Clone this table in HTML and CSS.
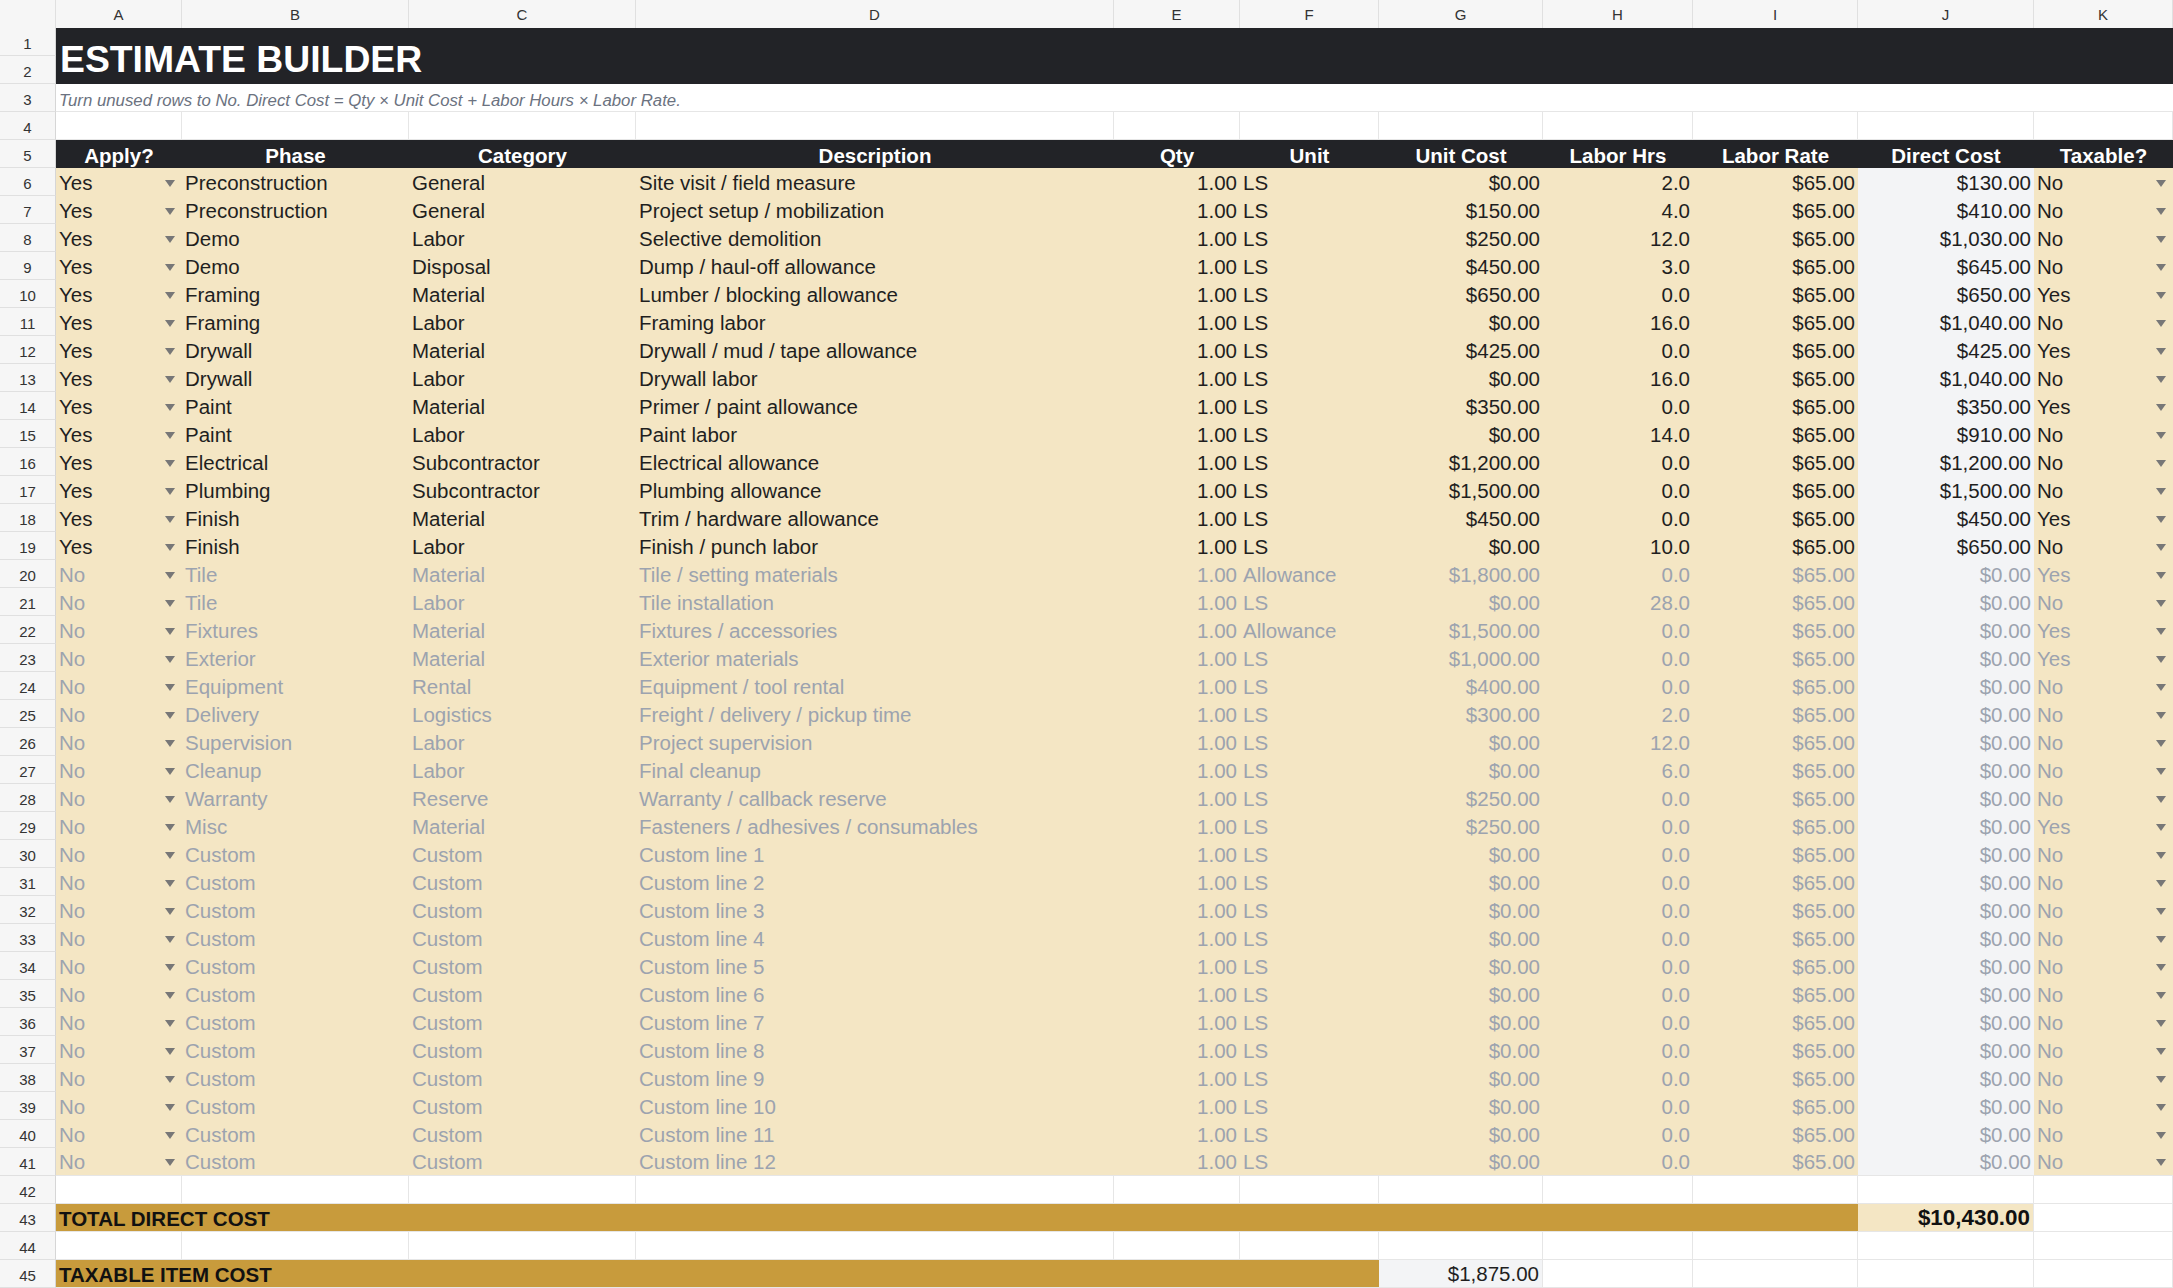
FILE: index.html
```html
<!DOCTYPE html>
<html lang="en">
<head>
<meta charset="utf-8">
<title>Estimate Builder</title>
<link rel="stylesheet" href="styles.css">
</head>
<body>
<div class="sheet">
  <div class="r hd">
    <div class="corner"></div>
    <div class="ch">A</div><div class="ch">B</div><div class="ch">C</div><div class="ch">D</div><div class="ch">E</div><div class="ch">F</div><div class="ch">G</div><div class="ch">H</div><div class="ch">I</div><div class="ch">J</div><div class="ch">K</div>
  </div>

  <div class="r title-row">
    <div class="rh-stack"><div class="rh">1</div><div class="rh">2</div></div>
    <div class="title">ESTIMATE BUILDER</div>
  </div>

  <div class="r">
    <div class="rh">3</div>
    <div class="note">Turn unused rows to No. Direct Cost = Qty × Unit Cost + Labor Hours × Labor Rate.</div>
  </div>

  <div class="r blank">
    <div class="rh">4</div>
    <div class="c"></div><div class="c"></div><div class="c"></div><div class="c"></div><div class="c"></div><div class="c"></div><div class="c"></div><div class="c"></div><div class="c"></div><div class="c"></div><div class="c"></div>
  </div>

  <div class="r th-row">
    <div class="rh">5</div>
    <div class="th">Apply?</div><div class="th">Phase</div><div class="th">Category</div><div class="th">Description</div><div class="th">Qty</div><div class="th">Unit</div><div class="th">Unit Cost</div><div class="th">Labor Hrs</div><div class="th">Labor Rate</div><div class="th">Direct Cost</div><div class="th">Taxable?</div>
  </div>

  <div class="r d"><div class="rh">6</div><div class="c dd">Yes</div><div class="c">Preconstruction</div><div class="c">General</div><div class="c">Site visit / field measure</div><div class="c n">1.00</div><div class="c">LS</div><div class="c n">$0.00</div><div class="c n">2.0</div><div class="c n">$65.00</div><div class="c n j">$130.00</div><div class="c dd">No</div></div>
  <div class="r d"><div class="rh">7</div><div class="c dd">Yes</div><div class="c">Preconstruction</div><div class="c">General</div><div class="c">Project setup / mobilization</div><div class="c n">1.00</div><div class="c">LS</div><div class="c n">$150.00</div><div class="c n">4.0</div><div class="c n">$65.00</div><div class="c n j">$410.00</div><div class="c dd">No</div></div>
  <div class="r d"><div class="rh">8</div><div class="c dd">Yes</div><div class="c">Demo</div><div class="c">Labor</div><div class="c">Selective demolition</div><div class="c n">1.00</div><div class="c">LS</div><div class="c n">$250.00</div><div class="c n">12.0</div><div class="c n">$65.00</div><div class="c n j">$1,030.00</div><div class="c dd">No</div></div>
  <div class="r d"><div class="rh">9</div><div class="c dd">Yes</div><div class="c">Demo</div><div class="c">Disposal</div><div class="c">Dump / haul-off allowance</div><div class="c n">1.00</div><div class="c">LS</div><div class="c n">$450.00</div><div class="c n">3.0</div><div class="c n">$65.00</div><div class="c n j">$645.00</div><div class="c dd">No</div></div>
  <div class="r d"><div class="rh">10</div><div class="c dd">Yes</div><div class="c">Framing</div><div class="c">Material</div><div class="c">Lumber / blocking allowance</div><div class="c n">1.00</div><div class="c">LS</div><div class="c n">$650.00</div><div class="c n">0.0</div><div class="c n">$65.00</div><div class="c n j">$650.00</div><div class="c dd">Yes</div></div>
  <div class="r d"><div class="rh">11</div><div class="c dd">Yes</div><div class="c">Framing</div><div class="c">Labor</div><div class="c">Framing labor</div><div class="c n">1.00</div><div class="c">LS</div><div class="c n">$0.00</div><div class="c n">16.0</div><div class="c n">$65.00</div><div class="c n j">$1,040.00</div><div class="c dd">No</div></div>
  <div class="r d"><div class="rh">12</div><div class="c dd">Yes</div><div class="c">Drywall</div><div class="c">Material</div><div class="c">Drywall / mud / tape allowance</div><div class="c n">1.00</div><div class="c">LS</div><div class="c n">$425.00</div><div class="c n">0.0</div><div class="c n">$65.00</div><div class="c n j">$425.00</div><div class="c dd">Yes</div></div>
  <div class="r d"><div class="rh">13</div><div class="c dd">Yes</div><div class="c">Drywall</div><div class="c">Labor</div><div class="c">Drywall labor</div><div class="c n">1.00</div><div class="c">LS</div><div class="c n">$0.00</div><div class="c n">16.0</div><div class="c n">$65.00</div><div class="c n j">$1,040.00</div><div class="c dd">No</div></div>
  <div class="r d"><div class="rh">14</div><div class="c dd">Yes</div><div class="c">Paint</div><div class="c">Material</div><div class="c">Primer / paint allowance</div><div class="c n">1.00</div><div class="c">LS</div><div class="c n">$350.00</div><div class="c n">0.0</div><div class="c n">$65.00</div><div class="c n j">$350.00</div><div class="c dd">Yes</div></div>
  <div class="r d"><div class="rh">15</div><div class="c dd">Yes</div><div class="c">Paint</div><div class="c">Labor</div><div class="c">Paint labor</div><div class="c n">1.00</div><div class="c">LS</div><div class="c n">$0.00</div><div class="c n">14.0</div><div class="c n">$65.00</div><div class="c n j">$910.00</div><div class="c dd">No</div></div>
  <div class="r d"><div class="rh">16</div><div class="c dd">Yes</div><div class="c">Electrical</div><div class="c">Subcontractor</div><div class="c">Electrical allowance</div><div class="c n">1.00</div><div class="c">LS</div><div class="c n">$1,200.00</div><div class="c n">0.0</div><div class="c n">$65.00</div><div class="c n j">$1,200.00</div><div class="c dd">No</div></div>
  <div class="r d"><div class="rh">17</div><div class="c dd">Yes</div><div class="c">Plumbing</div><div class="c">Subcontractor</div><div class="c">Plumbing allowance</div><div class="c n">1.00</div><div class="c">LS</div><div class="c n">$1,500.00</div><div class="c n">0.0</div><div class="c n">$65.00</div><div class="c n j">$1,500.00</div><div class="c dd">No</div></div>
  <div class="r d"><div class="rh">18</div><div class="c dd">Yes</div><div class="c">Finish</div><div class="c">Material</div><div class="c">Trim / hardware allowance</div><div class="c n">1.00</div><div class="c">LS</div><div class="c n">$450.00</div><div class="c n">0.0</div><div class="c n">$65.00</div><div class="c n j">$450.00</div><div class="c dd">Yes</div></div>
  <div class="r d"><div class="rh">19</div><div class="c dd">Yes</div><div class="c">Finish</div><div class="c">Labor</div><div class="c">Finish / punch labor</div><div class="c n">1.00</div><div class="c">LS</div><div class="c n">$0.00</div><div class="c n">10.0</div><div class="c n">$65.00</div><div class="c n j">$650.00</div><div class="c dd">No</div></div>
  <div class="r d off"><div class="rh">20</div><div class="c dd">No</div><div class="c">Tile</div><div class="c">Material</div><div class="c">Tile / setting materials</div><div class="c n">1.00</div><div class="c">Allowance</div><div class="c n">$1,800.00</div><div class="c n">0.0</div><div class="c n">$65.00</div><div class="c n j">$0.00</div><div class="c dd">Yes</div></div>
  <div class="r d off"><div class="rh">21</div><div class="c dd">No</div><div class="c">Tile</div><div class="c">Labor</div><div class="c">Tile installation</div><div class="c n">1.00</div><div class="c">LS</div><div class="c n">$0.00</div><div class="c n">28.0</div><div class="c n">$65.00</div><div class="c n j">$0.00</div><div class="c dd">No</div></div>
  <div class="r d off"><div class="rh">22</div><div class="c dd">No</div><div class="c">Fixtures</div><div class="c">Material</div><div class="c">Fixtures / accessories</div><div class="c n">1.00</div><div class="c">Allowance</div><div class="c n">$1,500.00</div><div class="c n">0.0</div><div class="c n">$65.00</div><div class="c n j">$0.00</div><div class="c dd">Yes</div></div>
  <div class="r d off"><div class="rh">23</div><div class="c dd">No</div><div class="c">Exterior</div><div class="c">Material</div><div class="c">Exterior materials</div><div class="c n">1.00</div><div class="c">LS</div><div class="c n">$1,000.00</div><div class="c n">0.0</div><div class="c n">$65.00</div><div class="c n j">$0.00</div><div class="c dd">Yes</div></div>
  <div class="r d off"><div class="rh">24</div><div class="c dd">No</div><div class="c">Equipment</div><div class="c">Rental</div><div class="c">Equipment / tool rental</div><div class="c n">1.00</div><div class="c">LS</div><div class="c n">$400.00</div><div class="c n">0.0</div><div class="c n">$65.00</div><div class="c n j">$0.00</div><div class="c dd">No</div></div>
  <div class="r d off"><div class="rh">25</div><div class="c dd">No</div><div class="c">Delivery</div><div class="c">Logistics</div><div class="c">Freight / delivery / pickup time</div><div class="c n">1.00</div><div class="c">LS</div><div class="c n">$300.00</div><div class="c n">2.0</div><div class="c n">$65.00</div><div class="c n j">$0.00</div><div class="c dd">No</div></div>
  <div class="r d off"><div class="rh">26</div><div class="c dd">No</div><div class="c">Supervision</div><div class="c">Labor</div><div class="c">Project supervision</div><div class="c n">1.00</div><div class="c">LS</div><div class="c n">$0.00</div><div class="c n">12.0</div><div class="c n">$65.00</div><div class="c n j">$0.00</div><div class="c dd">No</div></div>
  <div class="r d off"><div class="rh">27</div><div class="c dd">No</div><div class="c">Cleanup</div><div class="c">Labor</div><div class="c">Final cleanup</div><div class="c n">1.00</div><div class="c">LS</div><div class="c n">$0.00</div><div class="c n">6.0</div><div class="c n">$65.00</div><div class="c n j">$0.00</div><div class="c dd">No</div></div>
  <div class="r d off"><div class="rh">28</div><div class="c dd">No</div><div class="c">Warranty</div><div class="c">Reserve</div><div class="c">Warranty / callback reserve</div><div class="c n">1.00</div><div class="c">LS</div><div class="c n">$250.00</div><div class="c n">0.0</div><div class="c n">$65.00</div><div class="c n j">$0.00</div><div class="c dd">No</div></div>
  <div class="r d off"><div class="rh">29</div><div class="c dd">No</div><div class="c">Misc</div><div class="c">Material</div><div class="c">Fasteners / adhesives / consumables</div><div class="c n">1.00</div><div class="c">LS</div><div class="c n">$250.00</div><div class="c n">0.0</div><div class="c n">$65.00</div><div class="c n j">$0.00</div><div class="c dd">Yes</div></div>
  <div class="r d off"><div class="rh">30</div><div class="c dd">No</div><div class="c">Custom</div><div class="c">Custom</div><div class="c">Custom line 1</div><div class="c n">1.00</div><div class="c">LS</div><div class="c n">$0.00</div><div class="c n">0.0</div><div class="c n">$65.00</div><div class="c n j">$0.00</div><div class="c dd">No</div></div>
  <div class="r d off"><div class="rh">31</div><div class="c dd">No</div><div class="c">Custom</div><div class="c">Custom</div><div class="c">Custom line 2</div><div class="c n">1.00</div><div class="c">LS</div><div class="c n">$0.00</div><div class="c n">0.0</div><div class="c n">$65.00</div><div class="c n j">$0.00</div><div class="c dd">No</div></div>
  <div class="r d off"><div class="rh">32</div><div class="c dd">No</div><div class="c">Custom</div><div class="c">Custom</div><div class="c">Custom line 3</div><div class="c n">1.00</div><div class="c">LS</div><div class="c n">$0.00</div><div class="c n">0.0</div><div class="c n">$65.00</div><div class="c n j">$0.00</div><div class="c dd">No</div></div>
  <div class="r d off"><div class="rh">33</div><div class="c dd">No</div><div class="c">Custom</div><div class="c">Custom</div><div class="c">Custom line 4</div><div class="c n">1.00</div><div class="c">LS</div><div class="c n">$0.00</div><div class="c n">0.0</div><div class="c n">$65.00</div><div class="c n j">$0.00</div><div class="c dd">No</div></div>
  <div class="r d off"><div class="rh">34</div><div class="c dd">No</div><div class="c">Custom</div><div class="c">Custom</div><div class="c">Custom line 5</div><div class="c n">1.00</div><div class="c">LS</div><div class="c n">$0.00</div><div class="c n">0.0</div><div class="c n">$65.00</div><div class="c n j">$0.00</div><div class="c dd">No</div></div>
  <div class="r d off"><div class="rh">35</div><div class="c dd">No</div><div class="c">Custom</div><div class="c">Custom</div><div class="c">Custom line 6</div><div class="c n">1.00</div><div class="c">LS</div><div class="c n">$0.00</div><div class="c n">0.0</div><div class="c n">$65.00</div><div class="c n j">$0.00</div><div class="c dd">No</div></div>
  <div class="r d off"><div class="rh">36</div><div class="c dd">No</div><div class="c">Custom</div><div class="c">Custom</div><div class="c">Custom line 7</div><div class="c n">1.00</div><div class="c">LS</div><div class="c n">$0.00</div><div class="c n">0.0</div><div class="c n">$65.00</div><div class="c n j">$0.00</div><div class="c dd">No</div></div>
  <div class="r d off"><div class="rh">37</div><div class="c dd">No</div><div class="c">Custom</div><div class="c">Custom</div><div class="c">Custom line 8</div><div class="c n">1.00</div><div class="c">LS</div><div class="c n">$0.00</div><div class="c n">0.0</div><div class="c n">$65.00</div><div class="c n j">$0.00</div><div class="c dd">No</div></div>
  <div class="r d off"><div class="rh">38</div><div class="c dd">No</div><div class="c">Custom</div><div class="c">Custom</div><div class="c">Custom line 9</div><div class="c n">1.00</div><div class="c">LS</div><div class="c n">$0.00</div><div class="c n">0.0</div><div class="c n">$65.00</div><div class="c n j">$0.00</div><div class="c dd">No</div></div>
  <div class="r d off"><div class="rh">39</div><div class="c dd">No</div><div class="c">Custom</div><div class="c">Custom</div><div class="c">Custom line 10</div><div class="c n">1.00</div><div class="c">LS</div><div class="c n">$0.00</div><div class="c n">0.0</div><div class="c n">$65.00</div><div class="c n j">$0.00</div><div class="c dd">No</div></div>
  <div class="r d off"><div class="rh">40</div><div class="c dd">No</div><div class="c">Custom</div><div class="c">Custom</div><div class="c">Custom line 11</div><div class="c n">1.00</div><div class="c">LS</div><div class="c n">$0.00</div><div class="c n">0.0</div><div class="c n">$65.00</div><div class="c n j">$0.00</div><div class="c dd">No</div></div>
  <div class="r d off last"><div class="rh">41</div><div class="c dd">No</div><div class="c">Custom</div><div class="c">Custom</div><div class="c">Custom line 12</div><div class="c n">1.00</div><div class="c">LS</div><div class="c n">$0.00</div><div class="c n">0.0</div><div class="c n">$65.00</div><div class="c n j">$0.00</div><div class="c dd">No</div></div>

  <div class="r blank">
    <div class="rh">42</div>
    <div class="c"></div><div class="c"></div><div class="c"></div><div class="c"></div><div class="c"></div><div class="c"></div><div class="c"></div><div class="c"></div><div class="c"></div><div class="c"></div><div class="c"></div>
  </div>

  <div class="r blank">
    <div class="rh">43</div>
    <div class="c gold span-ai">TOTAL DIRECT COST</div>
    <div class="c n beige bold">$10,430.00</div>
    <div class="c"></div>
  </div>

  <div class="r blank">
    <div class="rh">44</div>
    <div class="c"></div><div class="c"></div><div class="c"></div><div class="c"></div><div class="c"></div><div class="c"></div><div class="c"></div><div class="c"></div><div class="c"></div><div class="c"></div><div class="c"></div>
  </div>

  <div class="r blank">
    <div class="rh">45</div>
    <div class="c gold span-af">TAXABLE ITEM COST</div>
    <div class="c n j">$1,875.00</div>
    <div class="c"></div><div class="c"></div><div class="c"></div><div class="c"></div>
  </div>
</div>
</body>
</html>
```

FILE: styles.css
```css
html, body {
  margin: 0;
  padding: 0;
  background: #ffffff;
}

body {
  overflow: hidden;
}

.sheet {
  width: 2173px;
  font-family: "Liberation Sans", Arial, Helvetica, sans-serif;
  color: #1f1f1f;
}

.r {
  display: grid;
  grid-template-columns: 56px 126px 227px 227px 478px 126px 139px 164px 150px 165px 176px 139px;
  height: 28px;
}

/* column header row */
.corner,
.ch {
  box-sizing: border-box;
  background: #f6f6f6;
  border-right: 1px solid #e0e0e0;
  border-bottom: 1px solid #d6d6d6;
}

.ch {
  font-size: 15px;
  color: #333333;
  text-align: center;
  line-height: 28px;
  padding-top: 1px;
}

/* row headers */
.rh {
  box-sizing: border-box;
  height: 28px;
  background: #f6f6f6;
  border-right: 1px solid #d6d6d6;
  border-bottom: 1px solid #e0e0e0;
  font-size: 15px;
  color: #333333;
  text-align: center;
  line-height: 28px;
  padding-top: 2px;
}

.title-row {
  height: 56px;
}

.rh-stack {
  display: flex;
  flex-direction: column;
}

.title {
  grid-column: 2 / -1;
  background: #222327;
  color: #ffffff;
  font-weight: bold;
  font-size: 37.33px;
  display: flex;
  align-items: flex-end;
  padding: 0 4px 3px;
  white-space: nowrap;
}

.note {
  grid-column: 2 / -1;
  box-sizing: border-box;
  border-bottom: 1px solid #e6e6e6;
  font-style: italic;
  font-size: 16.8px;
  color: #6b7280;
  display: flex;
  align-items: flex-end;
  padding: 0 3px 0;
  white-space: nowrap;
}

/* header row */
.th {
  background: #222327;
  color: #ffffff;
  font-weight: bold;
  font-size: 20.53px;
  display: flex;
  align-items: flex-end;
  justify-content: center;
  padding-bottom: 0;
  white-space: nowrap;
}

/* cells */
.c {
  box-sizing: border-box;
  min-width: 0;
  display: flex;
  align-items: flex-end;
  padding: 0 3px 1px;
  font-size: 20.53px;
  white-space: nowrap;
  overflow: hidden;
}

.blank .c {
  border-right: 1px solid #e6e6e6;
  border-bottom: 1px solid #e6e6e6;
}

.d .c {
  background: #f4e6c4;
}

.d.last .c {
  border-bottom: 1px solid #e6e6e6;
}

.off .c {
  color: #9ca3af;
}

.n {
  justify-content: flex-end;
}

.d .c.j,
.c.j {
  background: #f3f4f6;
}

.dd {
  justify-content: space-between;
}

.dd::after {
  content: "";
  width: 0;
  height: 0;
  border-left: 5px solid transparent;
  border-right: 5px solid transparent;
  border-top: 7px solid #777777;
  align-self: center;
  margin: 3px 4px 0 0;
}

.gold {
  background: #c89b3c;
  font-weight: bold;
  color: #111111;
  padding-bottom: 0;
}

.blank .c.gold {
  border-right: none;
}

.span-ai {
  grid-column: span 9;
}

.span-af {
  grid-column: span 6;
}

.beige {
  background: #f4e6c4;
}

.bold {
  font-weight: bold;
  font-size: 22.4px;
  color: #111111;
  padding-bottom: 0;
}
```
